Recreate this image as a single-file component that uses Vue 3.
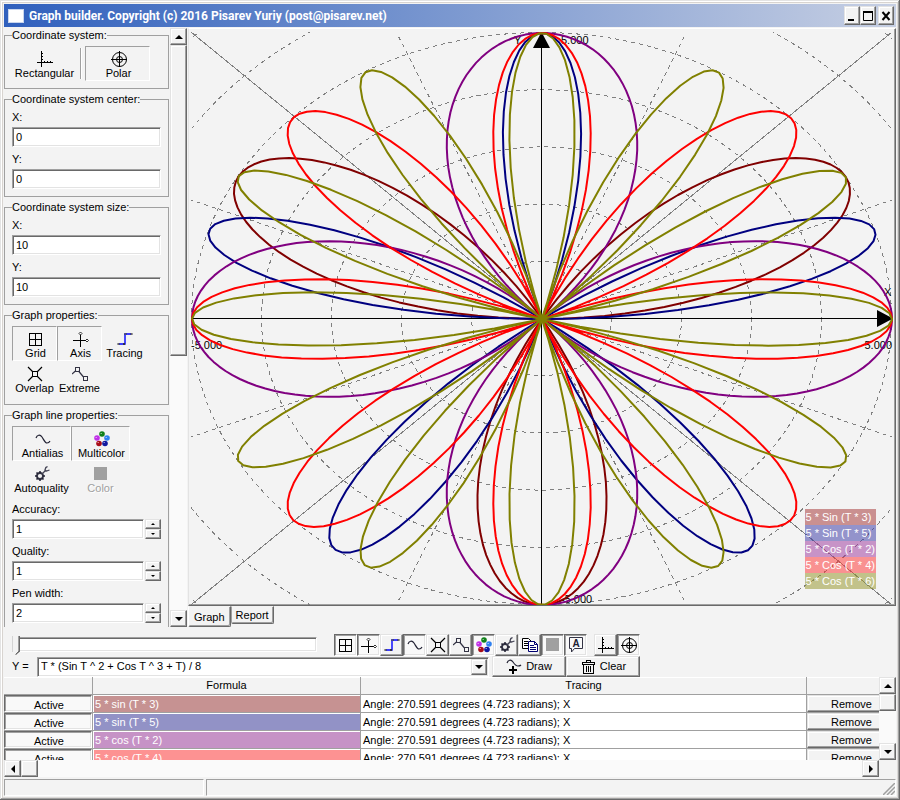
<script setup>
import { ref } from 'vue'

const cx = 352.5
const cy = 288.5
const ux = 70
const uy = 57.2

const curves = [
  { kind: 'Sin', fn: Math.sin, k: 3, color: '#800000', tint: 'rosy' },
  { kind: 'Sin', fn: Math.sin, k: 5, color: '#000080', tint: 'navy' },
  { kind: 'Cos', fn: Math.cos, k: 2, color: '#800080', tint: 'plum' },
  { kind: 'Cos', fn: Math.cos, k: 4, color: '#ff0000', tint: 'coral' },
  { kind: 'Cos', fn: Math.cos, k: 6, color: '#808000', tint: 'olive' },
]

// Samples r = 5 * fn(k * t); roses with an odd k close after half a turn.
function trace({ fn, k }) {
  const points = []
  const end = k % 2 ? Math.PI : Math.PI * 2
  for (let t = 0; t < end; t += 0.02) {
    const r = 5 * fn(k * t)
    const x = cx + 0.5 + r * Math.cos(t) * ux
    const y = cy + 0.5 - r * Math.sin(t) * uy
    points.push(`${x.toFixed(1)},${y.toFixed(1)}`)
  }
  return points.join(' ')
}

const rings = [1, 2, 3, 4, 5, 6, 7]

const rays = [22.5, 67.5, 112.5, 157.5, 202.5, 247.5, 292.5, 337.5].map((deg) => {
  const c = Math.cos((deg * Math.PI) / 180)
  const s = Math.sin((deg * Math.PI) / 180)
  const reach = 5 / Math.max(Math.abs(c), Math.abs(s))
  return { x: cx + c * reach * ux, y: cy - s * reach * uy }
})

const groups = [
  { title: 'Coordinate system center:', fields: [{ id: 'cx', label: 'X:', value: '0' }, { id: 'cy', label: 'Y:', value: '0' }] },
  { title: 'Coordinate system size:', fields: [{ id: 'sx', label: 'X:', value: '10' }, { id: 'sy', label: 'Y:', value: '10' }] },
]

const graphProps = [
  { icon: 'grid', text: 'Grid', down: true },
  { icon: 'axis', text: 'Axis', down: true },
  { icon: 'tracing', text: 'Tracing' },
  { icon: 'overlap', text: 'Overlap' },
  { icon: 'extreme', text: 'Extreme' },
]

const lineProps = [
  { icon: 'wave', text: 'Antialias', down: true },
  { icon: 'balls', text: 'Multicolor', down: true },
  { icon: 'gear', text: 'Autoquality' },
  { icon: 'square', text: 'Color', disabled: true },
]

const spinners = [
  { id: 'accuracy', label: 'Accuracy:', value: '1' },
  { id: 'quality', label: 'Quality:', value: '1' },
  { id: 'pen', label: 'Pen width:', value: '2' },
]

const tools = [
  { icon: 'grid', name: 'Grid', down: true },
  { icon: 'axis', name: 'Axis', down: true },
  { icon: 'tracing', name: 'Tracing' },
  { icon: 'wave', name: 'Antialias', down: true },
  { icon: 'overlap', name: 'Overlap' },
  { icon: 'extreme', name: 'Extreme' },
  { icon: 'balls', name: 'Multicolor', down: true },
  { icon: 'gear', name: 'Autoquality' },
  { icon: 'copy', name: 'Copy' },
  { icon: 'square', name: 'Color', down: true },
  { icon: 'hint', name: 'Hint', down: true },
]

const systems = [
  { icon: 'rect', name: 'Rectangular' },
  { icon: 'polar', name: 'Polar', down: true },
]

const formula = ref('T * (Sin T ^ 2 + Cos T ^ 3 + T) / 8')
const position = ref(0)
</script>

<template>
  <div class="window">
    <svg class="sprite" aria-hidden="true">
      <defs>
        <symbol id="i-rect" viewBox="0 0 16 16">
          <path d="M4.5 0V16M0 11.5H16M5 2.5H6M5 5.5H6M5 8.5H6M7.5 10V11M10.5 10V11M13.5 10V11" stroke="#000" fill="none" shape-rendering="crispEdges" />
        </symbol>
        <symbol id="i-polar" viewBox="0 0 16 16">
          <circle cx="8.5" cy="8.5" r="7" stroke="#000" fill="none" />
          <circle cx="8.5" cy="8.5" r="3" stroke="#000" fill="none" />
          <path d="M8.5 0V16M0 8.5H16" stroke="#000" shape-rendering="crispEdges" />
        </symbol>
        <symbol id="i-grid" viewBox="0 0 16 16">
          <path d="M1.5 2.5H13.5V14.5H1.5ZM7.5 2.5V14.5M1.5 8.5H13.5" stroke="#000" fill="none" shape-rendering="crispEdges" />
        </symbol>
        <symbol id="i-axis" viewBox="0 0 16 16">
          <path d="M7.5 3V16M0 9.5H13" stroke="#000" shape-rendering="crispEdges" />
          <path d="M7.5 1L9 2.5L7.5 4L6 2.5ZM14 8L15.500 9.500L14 11L12.500 9.500Z" stroke="#000" fill="#fff" stroke-width=".8" />
        </symbol>
        <symbol id="i-tracing" viewBox="0 0 16 16">
          <path d="M2 13H8V3H14" stroke="#0000ff" stroke-width="1.400" fill="none" />
          <path d="M1.500 12L2.500 13L1.500 14L.5 13ZM7 12L8 13L7 14L6 13ZM8.500 2L9.500 3L8.500 4L7.500 3ZM14.500 2L15.500 3L14.500 4L13.500 3Z" stroke="#000" fill="#fff" stroke-width=".7" />
        </symbol>
        <symbol id="i-overlap" viewBox="0 0 16 16">
          <path d="M1 1L6 6M15 1L10 6M1 15L6 10M15 15L10 10" stroke="#000" fill="none" stroke-width="1.200" />
          <path d="M5.500 5.500H10.500V10.500H5.500Z" stroke="#000" fill="none" shape-rendering="crispEdges" />
        </symbol>
        <symbol id="i-extreme" viewBox="0 0 16 16">
          <path d="M0 8L4 4.500M6.500 5L11.500 11" stroke="#334" fill="none" stroke-width="1.200" />
          <path d="M3.500 1.500H7.500V5.500H3.500ZM11.500 10.500H15.500V14.500H11.500Z" stroke="#334" fill="none" shape-rendering="crispEdges" />
        </symbol>
        <symbol id="i-wave" viewBox="0 0 16 16">
          <path d="M1 7C2 4 5 3 7 6C9 9 10 12 12 12C14 12 14.500 11 15 10" stroke="#223" fill="none" stroke-width="1.200" />
        </symbol>
        <symbol id="i-balls" viewBox="0 0 16 16">
          <circle cx="8" cy="3" r="2.800" fill="#10801a" />
          <circle cx="3" cy="7" r="2.800" fill="#c030e8" />
          <circle cx="13" cy="7" r="2.800" fill="#2f80f0" />
          <circle cx="5" cy="12.500" r="2.800" fill="#a80c18" />
          <circle cx="11" cy="12.500" r="2.800" fill="#1018a0" />
          <path d="M6.500 2.500H8M1.500 6.500H3M11.500 6.500H13M3.500 11.500H5M9.500 11.500H11" stroke="#fff" stroke-opacity=".5" />
        </symbol>
        <symbol id="i-gear" viewBox="0 0 16 16">
          <circle cx="6" cy="10" r="3" stroke="#334" stroke-width="1.800" fill="none" />
          <path d="M6 5V7M6 13V15M1 10H3M9 10H11M2.500 6.500L4 8M8 12L9.500 13.500M2.500 13.500L4 12" stroke="#223" stroke-width="1.500" />
          <path d="M8 8L12 4M12 1L11 4L12.500 5L15.500 4M12 1.500L13.500 .5" stroke="#445" fill="none" stroke-width="1.300" />
        </symbol>
        <symbol id="i-copy" viewBox="0 0 16 16">
          <path d="M.5 1.500H6.500L9.500 4.500V11.500H.5Z" fill="#fff" stroke="#000" />
          <path d="M2 4.500H6M2 6.500H7M2 8.500H7" stroke="#000" />
          <path d="M6.500 4.500H12.500L15.500 7.500V14.500H6.500Z" fill="#fff" stroke="#000070" />
          <path d="M12.500 4.500V7.500H15.500M8 8.500H12M8 10.500H14M8 12.500H14" stroke="#000070" fill="none" />
        </symbol>
        <symbol id="i-square" viewBox="0 0 16 16">
          <path d="M1 1H14V14H1Z" fill="#a0a0a0" />
        </symbol>
        <symbol id="i-hint" viewBox="0 0 16 16">
          <path d="M1.500 .5H14.500V11.500H6.500L3.500 15V11.500H1.500Z" stroke="#334" fill="none" />
          <text x="8" y="9.500" text-anchor="middle" font-family="Liberation Sans, sans-serif" font-weight="700" font-size="10" fill="#223">A</text>
        </symbol>
        <symbol id="i-draw" viewBox="0 0 16 16">
          <path d="M1 4C2 1 5 0 7 3C9 6 10 7 12 7C14 7 14.500 6.500 15 6" stroke="#223" fill="none" stroke-width="1.200" />
          <path d="M7 7V15M3 11H11" stroke="#000" stroke-width="2" shape-rendering="crispEdges" />
        </symbol>
        <symbol id="i-trash" viewBox="0 0 16 16">
          <path d="M2 3.500H15M6.500 3V1.500H10.500V3M2.500 3.500V5.500H14.500V3.500M3.500 6V14.500H13.500V6M6.500 7V13M8.500 7V13M10.500 7V13" stroke="#000" fill="none" shape-rendering="crispEdges" />
        </symbol>
      </defs>
    </svg>

    <header class="title">
      <span class="appicon"></span>
      <h1>Graph builder. Copyright (c) 2016 Pisarev Yuriy (post@pisarev.net)</h1>
      <div class="winbtns">
        <button class="raised" aria-label="Minimize"><svg viewBox="0 0 12 12"><path d="M2 10H8" stroke="#000" stroke-width="2" /></svg></button>
        <button class="raised" aria-label="Maximize"><svg viewBox="0 0 12 12"><path d="M1.500 2V10.500H10.500V2" stroke="#000" fill="none" /><path d="M1 2H11" stroke="#000" stroke-width="2" /></svg></button>
        <button class="raised close" aria-label="Close"><svg viewBox="0 0 12 12"><path d="M2.500 2L9.500 10M9.500 2L2.500 10" stroke="#000" stroke-width="2" /></svg></button>
      </div>
    </header>

    <main class="work">
      <aside class="side">
        <div class="panels">
          <fieldset>
            <legend>Coordinate system:</legend>
            <div class="flats">
              <button class="flat wide"><svg><use href="#i-rect" /></svg>Rectangular</button>
              <i class="sep"></i>
              <button class="flat wide down"><svg><use href="#i-polar" /></svg>Polar</button>
            </div>
          </fieldset>
          <fieldset v-for="g in groups" :key="g.title">
            <legend>{{ g.title }}</legend>
            <div v-for="f in g.fields" :key="f.id" class="field">
              <label :for="f.id">{{ f.label }}</label>
              <input :id="f.id" class="sunken" type="text" :value="f.value" />
            </div>
          </fieldset>
          <fieldset class="roomy">
            <legend>Graph properties:</legend>
            <div class="flats thirds">
              <button v-for="b in graphProps" :key="b.text" class="flat" :class="{ down: b.down }"><svg><use :href="'#i-' + b.icon" /></svg>{{ b.text }}</button>
            </div>
          </fieldset>
          <fieldset class="roomy">
            <legend>Graph line properties:</legend>
            <div class="flats halves">
              <button v-for="b in lineProps" :key="b.text" class="flat" :class="{ down: b.down }" :disabled="b.disabled"><svg><use :href="'#i-' + b.icon" /></svg>{{ b.text }}</button>
            </div>
            <div v-for="s in spinners" :key="s.id" class="field">
              <label :for="s.id">{{ s.label }}</label>
              <div class="spin">
                <input :id="s.id" class="sunken" type="text" :value="s.value" />
                <div class="updown">
                  <button class="raised" :aria-label="s.label + ' up'"><i class="tri up small"></i></button>
                  <button class="raised" :aria-label="s.label + ' down'"><i class="tri dn small"></i></button>
                </div>
              </div>
            </div>
          </fieldset>
        </div>
        <div class="vbar">
          <button class="raised" aria-label="Scroll up"><i class="tri up"></i></button>
          <div class="thumb tall raised"></div>
          <div class="rest"></div>
          <button class="raised" aria-label="Scroll down"><i class="tri dn"></i></button>
        </div>
      </aside>

      <section class="book">
        <div class="page">
          <svg class="plot" viewBox="0 0 706 575" role="img" aria-label="Polar graph">
            <defs>
              <clipPath id="area"><rect x="2" y="2" width="701" height="573" /></clipPath>
            </defs>
            <g clip-path="url(#area)" fill="none" stroke="#808080">
              <ellipse v-for="r in rings" :key="r" :cx="cx" :cy="cy" :rx="r * ux" :ry="r * uy" stroke-dasharray="4 4" shape-rendering="crispEdges" />
              <line v-for="(p, i) in rays" :key="i" :x1="cx" :y1="cy" :x2="p.x" :y2="p.y" stroke-dasharray="4 4" shape-rendering="crispEdges" />
              <path :d="`M${cx - 350} ${cy - 286}L${cx + 350} ${cy + 286}M${cx - 350} ${cy + 286}L${cx + 350} ${cy - 286}`" shape-rendering="crispEdges" />
            </g>
            <path d="M2 288.500H690M352.500 16V575" stroke="#000" shape-rendering="crispEdges" />
            <path d="M352.500 2L361 18H344ZM704 288.500L688 297V280Z" fill="#000" />
            <g class="marks">
              <text x="325" y="14">Y</text>
              <text x="372" y="14">5.000</text>
              <text x="695" y="266">X</text>
              <text x="703" y="319" text-anchor="end">5.000</text>
              <text x="2" y="319">-5.000</text>
              <text x="372" y="573">-5.000</text>
            </g>
            <polygon v-for="(c, i) in curves" :key="i" :points="trace(c)" fill="none" :stroke="c.color" stroke-width="2" stroke-linejoin="round" />
          </svg>
          <ul class="key">
            <li v-for="(c, i) in curves" :key="i" :class="c.tint">5 * {{ c.kind }} (T * {{ c.k }})</li>
          </ul>
        </div>
        <nav class="tabs">
          <button class="tab current">Graph</button>
          <button class="tab">Report</button>
        </nav>
      </section>
    </main>

    <section class="controls">
      <input v-model="position" class="slider" type="range" min="0" max="100" aria-label="Tracing position" />
      <div class="toolbar">
        <button v-for="t in tools" :key="t.name" class="tool raised" :class="{ pressed: t.down }" :aria-label="t.name"><svg><use :href="'#i-' + t.icon" /></svg></button>
        <span class="space"></span>
        <button v-for="t in systems" :key="t.name" class="tool raised" :class="{ pressed: t.down }" :aria-label="t.name"><svg><use :href="'#i-' + t.icon" /></svg></button>
      </div>
    </section>
    <section class="entry">
      <label for="formula">Y =</label>
      <div class="combo sunken">
        <select id="formula" v-model="formula">
          <option>T * (Sin T ^ 2 + Cos T ^ 3 + T) / 8</option>
        </select>
        <span class="drop raised"><i class="tri dn"></i></span>
      </div>
      <button class="action raised"><svg><use href="#i-draw" /></svg>Draw</button>
      <button class="action raised"><svg><use href="#i-trash" /></svg>Clear</button>
    </section>

    <section class="list">
      <div class="rows">
        <table>
          <colgroup>
            <col class="c-active" />
            <col class="c-formula" />
            <col />
            <col class="c-remove" />
          </colgroup>
          <thead>
            <tr><th></th><th>Formula</th><th>Tracing</th><th></th></tr>
          </thead>
          <tbody>
            <tr v-for="(c, i) in curves" :key="i">
              <td><button class="cell pressed">Active</button></td>
              <td class="expr" :class="c.tint">5 * {{ c.kind.toLowerCase() }} (T * {{ c.k }})</td>
              <td>Angle: 270.591 degrees (4.723 radians); X</td>
              <td><button class="cell raised">Remove</button></td>
            </tr>
          </tbody>
        </table>
      </div>
      <div class="vbar">
        <button class="raised" aria-label="Rows up"><i class="tri up"></i></button>
        <div class="thumb raised"></div>
        <div class="rest"></div>
        <button class="raised" aria-label="Rows down"><i class="tri dn"></i></button>
      </div>
      <div class="hbar">
        <button class="raised" aria-label="Scroll left"><i class="tri lt"></i></button>
        <div class="thumb raised"></div>
        <div class="rest"></div>
        <button class="raised" aria-label="Scroll right"><i class="tri rt"></i></button>
      </div>
    </section>

    <footer class="status">
      <span class="short"></span>
      <span class="long"><svg viewBox="0 0 12 12"><path d="M0 12L12 0M4 12L12 4M8 12L12 8" stroke="#a0a0a0" stroke-width="1.500" /></svg></span>
    </footer>
  </div>
</template>

<style>
body {
  margin: 0;
  background: #f3f3f3;
}
</style>

<style scoped>
* {
  box-sizing: border-box;
}
.window {
  display: flex;
  flex-direction: column;
  height: 100vh;
  padding: 4px;
  overflow: hidden;
  background: #f3f3f3;
  color: #000;
  font: 11px/13px "Liberation Sans", Arial, sans-serif;
  box-shadow: inset -1px -1px #696969, inset 1px 1px #e3e3e3, inset -2px -2px #a0a0a0, inset 2px 2px #fff, inset 3px 3px #d8d4d0, inset -3px -3px #dcdad8;
}
.sprite {
  position: absolute;
  width: 0;
  height: 0;
}
button,
input,
select {
  margin: 0;
  padding: 0;
  border: 0;
  border-radius: 0;
  color: inherit;
  font: inherit;
  background: #f3f3f3;
}
.raised {
  border: 1px solid;
  border-color: #e3e3e3 #696969 #696969 #e3e3e3;
  box-shadow: inset -1px -1px #a0a0a0, inset 1px 1px #fff;
}
.sunken {
  border: 1px solid;
  border-color: #a0a0a0 #fff #fff #a0a0a0;
  box-shadow: inset 1px 1px #696969, inset -1px -1px #e3e3e3;
  background: #fff;
}
.tri {
  display: block;
  width: 0;
  height: 0;
  border: 4px solid transparent;
}
.up { border-top: 0; border-bottom-color: #000; }
.dn { border-bottom: 0; border-top-color: #000; }
.lt { border-left: 0; border-right-color: #000; }
.rt { border-right: 0; border-left-color: #000; }
.small { border-width: 2px; }
.up.small { border-top: 0; }
.dn.small { border-bottom: 0; }

.title {
  display: flex;
  flex: none;
  align-items: center;
  height: 23px;
  padding: 0 2px 0 4px;
  background: linear-gradient(90deg, #3060bd, #7b98d0 50%, #c6cfe3);
}
.appicon {
  width: 16px;
  height: 14px;
  border: 1px solid #c9d6ee;
  background: #fff;
}
.title h1 {
  flex: 1;
  margin: 0 0 0 5px;
  color: #fff;
  font: 700 12px/16px Roboto, "Open Sans", sans-serif;
  white-space: nowrap;
}
.winbtns {
  display: flex;
}
.winbtns button {
  display: grid;
  place-items: center;
  width: 16px;
  height: 19px;
}
.winbtns .close {
  margin-left: 2px;
}
.winbtns svg {
  width: 12px;
  height: 12px;
}

.work {
  display: flex;
  flex: 1;
  min-height: 0;
  padding-top: 1px;
}
.side {
  display: flex;
  flex: none;
  width: 183px;
}
.panels {
  display: flex;
  flex-direction: column;
  gap: 4px;
  flex: 1;
  padding: 1px 1px 0 0;
  overflow: hidden;
}
fieldset {
  flex: none;
  min-width: 0;
  margin: 0;
  padding: 5px 7px 7px;
  border: 1px solid #a0a0a0;
}
fieldset.roomy {
  padding-bottom: 8px;
}
legend {
  height: 12px;
  padding: 0;
  line-height: 12px;
}
.field label {
  display: block;
  height: 14px;
  margin-bottom: 3px;
  line-height: 15px;
}
.field + .field {
  margin-top: 5px;
}
.flats + .field {
  margin-top: 6px;
}
.field input {
  display: block;
  width: 100%;
  height: 20px;
  padding: 0 3px;
}
.flats {
  display: flex;
}
.thirds,
.halves {
  display: grid;
  grid-auto-rows: 35px;
}
.thirds {
  grid-template-columns: repeat(3, 45px);
}
.halves {
  grid-template-columns: repeat(2, 59px);
}
.flat {
  display: flex;
  flex-direction: column;
  align-items: center;
  height: 35px;
  padding-top: 4px;
  border: 1px solid transparent;
  background: none;
  white-space: nowrap;
}
.flat.wide {
  width: 65px;
}
.flat svg {
  flex: none;
  width: 16px;
  height: 16px;
}
.flat.down {
  padding-left: 2px;
  border-color: #a0a0a0 #fff #fff #a0a0a0;
}
.flat:disabled {
  color: #a0a0a0;
  text-shadow: 1px 1px #fff;
}
.sep {
  width: 2px;
  margin: 2px 3px;
  background: #a0a0a0;
  border-right: 1px solid #fff;
}
.spin {
  display: flex;
  gap: 1px;
}
.updown {
  flex: none;
  width: 16px;
}
.updown button {
  display: grid;
  place-items: center;
  width: 16px;
  height: 10px;
}

.vbar,
.hbar {
  display: flex;
  flex: none;
  background: #fafafa;
}
.vbar {
  flex-direction: column;
  width: 17px;
}
.vbar button,
.hbar button,
.thumb {
  display: grid;
  flex: none;
  place-items: center;
  width: 17px;
  height: 17px;
  background: #f3f3f3;
}
.thumb.tall {
  flex: 310;
}
.rest {
  flex: 1;
}
.thumb.tall + .rest {
  flex: 255;
}

.book {
  display: flex;
  flex: 1;
  flex-direction: column;
  min-width: 0;
  padding-left: 1px;
}
.page {
  position: relative;
  flex: 1;
  min-height: 0;
  padding: 1px 0 0;
  border: 1px solid;
  border-color: #fff #696969 #696969 #e3e3e3;
  box-shadow: inset -1px -1px #a0a0a0;
}
.plot {
  display: block;
  width: 100%;
  height: 100%;
}
.marks {
  font: 11px "Liberation Sans", Arial, sans-serif;
}
.key {
  position: absolute;
  right: 19px;
  bottom: 16px;
  margin: 0;
  padding: 0;
  color: #fff;
  list-style: none;
}
.key li {
  height: 16px;
  padding: 0 1px;
  line-height: 16px;
}
.key .rosy { background: rgba(166, 60, 60, 0.54); }
.key .navy { background: rgba(60, 60, 166, 0.52); }
.key .plum { background: rgba(156, 52, 156, 0.5); }
.key .coral { background: rgba(255, 48, 48, 0.5); }
.key .olive { background: rgba(146, 146, 34, 0.5); }
.tabs {
  display: flex;
  flex: none;
  align-items: flex-start;
  height: 21px;
}
.tab {
  height: 18px;
  padding: 0 4px;
  border: 1px solid;
  border-color: #f3f3f3 #696969 #696969 #a0a0a0;
  border-radius: 0 0 2px 2px;
  box-shadow: inset -1px -1px #a0a0a0;
}
.tab.current {
  height: 21px;
  padding: 2px 5px 0;
  border-left-color: #fff;
}

.controls {
  display: flex;
  flex: none;
  align-items: center;
  height: 29px;
  padding: 6px 256px 0 8px;
}
.slider {
  flex: 1;
  min-width: 0;
  height: 20px;
  margin-right: 17px;
  appearance: none;
  background: transparent;
}
.slider::-webkit-slider-runnable-track {
  height: 15px;
  border: 1px solid;
  border-color: #a0a0a0 #fff #fff #a0a0a0;
  box-shadow: inset 1px 1px #696969, inset -1px -1px #e3e3e3;
  background: #fff;
}
.slider::-webkit-slider-thumb {
  width: 8px;
  height: 19px;
  margin: -2px 0 0 -1px;
  appearance: none;
  background:
    linear-gradient(135deg, transparent 15px, #696969 15px),
    linear-gradient(90deg, #d4d4d4 1px, #f3f3f3 1px, #f3f3f3 6px, #a0a0a0 6px, #a0a0a0 7px, #696969 7px);
  clip-path: polygon(0 0, 100% 0, 100% 80%, 50% 100%, 0 80%);
}
.toolbar {
  display: flex;
  flex: none;
}
.tool {
  display: grid;
  place-items: center;
  width: 23px;
  height: 22px;
}
.tool svg {
  width: 16px;
  height: 16px;
}
.pressed {
  border: 1px solid;
  border-color: #696969 #fff #fff #696969;
  box-shadow: inset 1px 1px #a0a0a0, inset -1px -1px #e3e3e3;
  background: #f9f9f9;
}
.space {
  width: 7px;
}
.entry {
  display: flex;
  flex: none;
  align-items: center;
  height: 21px;
  padding: 0 256px 0 8px;
}
.entry label {
  width: 25px;
}
.combo {
  display: flex;
  flex: 1;
  height: 20px;
  margin-right: 3px;
  padding: 1px;
}
.combo select {
  flex: 1;
  min-width: 0;
  padding-left: 2px;
  appearance: none;
  background: none;
}
.drop {
  display: grid;
  place-items: center;
  width: 16px;
  background: #f3f3f3;
}
.action {
  display: flex;
  align-items: center;
  justify-content: center;
  gap: 4px;
  width: 74px;
  height: 21px;
}
.action svg {
  width: 16px;
  height: 16px;
}

.list {
  display: grid;
  flex: none;
  grid-template-columns: minmax(0, 1fr) 17px;
  grid-template-rows: 83px 17px;
}
.rows {
  overflow: hidden;
}
table {
  width: calc(100% + 18px);
  border-collapse: separate;
  border-spacing: 0;
  table-layout: fixed;
}
.c-active { width: 89px; }
.c-formula { width: 268px; }
.c-remove { width: 90px; }
th,
td {
  height: 18px;
  padding: 0;
  border-right: 1px solid #a0a0a0;
  border-bottom: 1px solid #a0a0a0;
  line-height: 15px;
  white-space: nowrap;
}
th {
  font-weight: 400;
  box-shadow: inset 0 1px #fff;
}
td {
  padding: 2px 0 0 2px;
  background: #fff;
}
td:first-child,
td:last-child {
  padding: 0;
}
td.expr {
  color: #fff;
  box-shadow: inset 1px 1px #fff;
}
.rosy.expr { background: #c69292; }
.navy.expr { background: #9292c6; }
.plum.expr { background: #c692c6; }
.coral.expr { background: #fd9292; }
.olive.expr { background: #c2c28a; }
.cell {
  display: block;
  width: 100%;
  height: 17px;
  padding-top: 1px;
  line-height: 14px;
}
.cell.pressed {
  padding: 2px 0 0 2px;
}
.status {
  display: flex;
  flex: none;
  gap: 2px;
  height: 19px;
  padding-top: 2px;
}
.status span {
  border: 1px solid;
  border-color: #a0a0a0 #fff #fff #a0a0a0;
}
.short {
  width: 200px;
}
.long {
  display: flex;
  flex: 1;
  align-items: flex-end;
  justify-content: flex-end;
}
.long svg {
  width: 12px;
  height: 12px;
}
</style>
